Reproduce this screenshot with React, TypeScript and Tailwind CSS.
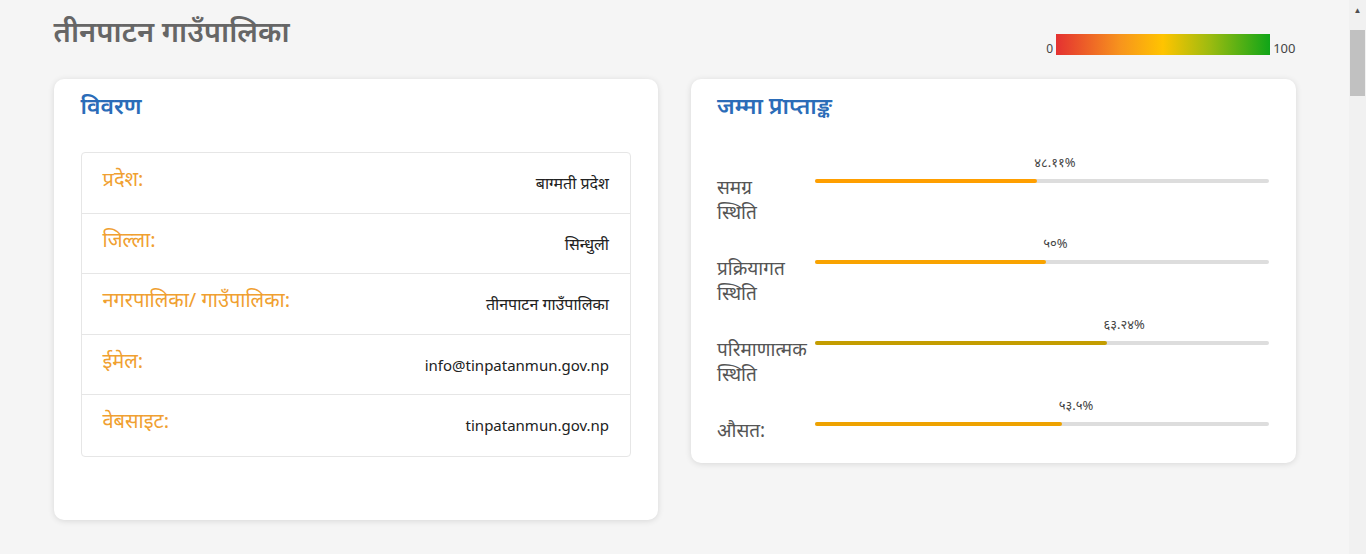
import React from "react";

const details = [
  { label: "प्रदेश:", value: "बाग्मती प्रदेश", latin: false },
  { label: "जिल्ला:", value: "सिन्धुली", latin: false },
  { label: "नगरपालिका/ गाउँपालिका:", value: "तीनपाटन गाउँपालिका", latin: false },
  { label: "ईमेल:", value: "info@tinpatanmun.gov.np", latin: true },
  { label: "वेबसाइट:", value: "tinpatanmun.gov.np", latin: true },
];

const scores = [
  { label: ["समग्र", "स्थिति"], text: "४८.११%", pct: 49, color: "#ff9f00" },
  { label: ["प्रक्रियागत", "स्थिति"], text: "५०%", pct: 51, color: "#f9a300" },
  { label: ["परिमाणात्मक", "स्थिति"], text: "६३.२४%", pct: 64.3, color: "#c49d00" },
  { label: ["औसत:"], text: "५३.५%", pct: 54.4, color: "#eea200" },
];

const font = { fontFamily: '"Noto Sans", "Noto Sans Devanagari", sans-serif' };

export default function App() {
  return (
    <div className="flex h-screen overflow-hidden bg-[#f5f5f5]" style={font}>
      <div className="flex-1">
        <div className="mx-auto w-[1242px]">
          <div className="flex items-start justify-between pt-[11px]">
            <h1 className="text-[29px] font-semibold leading-[40px] text-[#666666]">
              तीनपाटन गाउँपालिका
            </h1>
            <div className="mt-[23px] flex items-end gap-[3px] text-[#444444]">
              <span className="text-[12px] leading-none">0</span>
              <div className="h-[21px] w-[214px] bg-[linear-gradient(to_right,#e43131,#f7941d_30%,#ffc400_50%,#9cbb10_72%,#10a518)]" />
              <span className="text-[13px] leading-none">100</span>
            </div>
          </div>

          <div className="mt-[24px] grid grid-cols-2 items-start gap-[33px]">
            <div className="rounded-[10px] bg-white px-[27px] pt-[10px] pb-[63px] shadow-[0_1px_6px_rgba(0,0,0,0.12)]">
              <h2 className="text-[23px] font-semibold leading-[32px] text-[#2b6cb8]">विवरण</h2>
              <div className="mt-[31px] rounded-[4px] border border-[#e6e6e6]">
                {details.map((d, i) => (
                  <div
                    key={d.label}
                    className={`flex h-[60.5px] items-start justify-between px-[21px] pt-[13px] ${
                      i < details.length - 1 ? "border-b border-[#e6e6e6]" : ""
                    }`}
                  >
                    <span className="text-[20px] leading-[26px] text-[#f0a030]">{d.label}</span>
                    <span
                      className={`mt-[5px] leading-[24px] text-[#222222] ${
                        d.latin ? "text-[15px]" : "text-[16px]"
                      }`}
                    >
                      {d.value}
                    </span>
                  </div>
                ))}
              </div>
            </div>

            <div className="rounded-[10px] bg-white px-[26px] pt-[10px] pb-[20px] shadow-[0_1px_6px_rgba(0,0,0,0.12)]">
              <h2 className="text-[23px] font-semibold leading-[32px] text-[#2b6cb8]">जम्मा प्राप्ताङ्क</h2>
              <div className="mt-[33px] flex flex-col gap-[10px]">
                {scores.map((s) => (
                  <div key={s.text}>
                    <div className="relative ml-[98px] mr-[1px] h-[21px]">
                      <span
                        className="absolute top-0 -ml-[3px] text-[13px] leading-[16px] text-[#444444]"
                        style={{ left: `${s.pct}%` }}
                      >
                        {s.text}
                      </span>
                    </div>
                    <div className="flex items-start">
                      <div className="w-[98px] shrink-0 whitespace-nowrap text-[19px] leading-[25px] text-[#555555]">
                        {s.label.map((l) => (
                          <div key={l}>{l}</div>
                        ))}
                      </div>
                      <div className="mt-[4px] mr-[1px] h-[4px] flex-1 rounded-full bg-[#dddddd]">
                        <div
                          className="h-[4px] rounded-full"
                          style={{ width: `${s.pct}%`, backgroundColor: s.color }}
                        />
                      </div>
                    </div>
                  </div>
                ))}
              </div>
            </div>
          </div>
        </div>
      </div>

      <div className="flex w-[17px] shrink-0 flex-col items-center bg-[#f1f1f1]">
        <span className="mt-[2px] h-[15px] text-[8px] leading-[15px] text-[#505050]">▲</span>
        <div className="mt-[13px] h-[66px] w-[15px] bg-[#c1c1c1]" />
      </div>
    </div>
  );
}
